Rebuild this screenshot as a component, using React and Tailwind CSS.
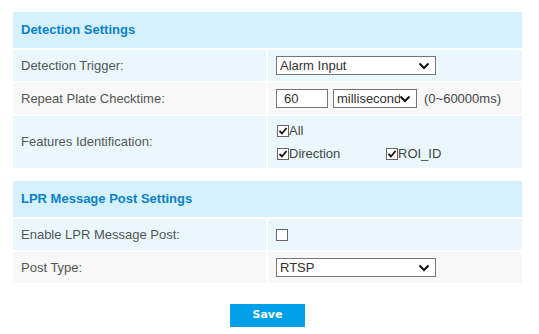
import React from 'react';

const Chevron = () => (
  <svg width="12" height="8" viewBox="0 0 12 8" className="absolute right-[5px] top-1/2 -translate-y-1/2 pointer-events-none">
    <path d="M1.5 1.5 L6 6 L10.5 1.5" fill="none" stroke="#111" strokeWidth="2" />
  </svg>
);

const Select = ({ value, width }) => (
  <div className={`relative h-[19px] border border-[#767676] bg-white ${width}`}>
    <div className="absolute inset-y-0 left-0 right-[16px] overflow-hidden whitespace-nowrap pl-[3px] text-[13px] leading-[17px] text-[#333]">
      {value}
    </div>
    <Chevron />
  </div>
);

const Check = ({ checked, label }) => (
  <span className="flex items-center text-[13px] leading-[16px] text-[#444]">
    <span className="flex h-[12px] w-[12px] items-center justify-center border border-[#666] bg-white">
      {checked && (
        <svg width="10" height="10" viewBox="0 0 10 10">
          <path d="M1.5 5 L4 7.5 L8.5 2" fill="none" stroke="#111" strokeWidth="1.8" />
        </svg>
      )}
    </span>
    {label && <span>{label}</span>}
  </span>
);

const Header = ({ title }) => (
  <div className="flex h-[36px] items-center bg-[#d5f1fd] px-[8px] text-[13px] font-bold text-[#0a82c9]">
    {title}
  </div>
);

const Row = ({ label, tone, height = 'h-[31px]', children }) => {
  const bg = tone === 'blue' ? 'bg-[#eaf8fe]' : 'bg-[#f8f8f8]';
  return (
    <div className={`flex gap-[2px] ${height}`}>
      <div className={`flex w-[253px] items-center px-[8px] text-[13px] text-[#555] ${bg}`}>{label}</div>
      <div className={`flex flex-1 items-center px-[8px] ${bg}`}>{children}</div>
    </div>
  );
};

export default function App() {
  return (
    <div className="h-[334px] w-[539px] bg-white pt-[12px] pl-[13px]" style={{ fontFamily: '"Liberation Sans", Arial, sans-serif' }}>
      <div className="flex w-[509px] flex-col gap-[2px]">
        <Header title="Detection Settings" />
        <Row label="Detection Trigger:" tone="blue">
          <Select value="Alarm Input" width="w-[160px]" />
        </Row>
        <Row label="Repeat Plate Checktime:" tone="gray">
          <div className="flex items-center gap-[5px]">
            <div className="h-[19px] w-[52px] border border-[#767676] bg-white pl-[7px] text-[13px] leading-[17px] text-[#333]">60</div>
            <Select value="millisecond" width="w-[84px]" />
            <span className="ml-[2px] text-[13px] text-[#444]">(0~60000ms)</span>
          </div>
        </Row>
        <Row label="Features Identification:" tone="blue" height="h-[52px]">
          <div className="flex flex-col gap-[7px] pl-[1px] leading-[16px]">
            <Check checked label="All" />
            <div className="flex">
              <div className="flex w-[109px]"><Check checked label="Direction" /></div>
              <Check checked label="ROI_ID" />
            </div>
          </div>
        </Row>
      </div>

      <div className="mt-[13px] flex w-[509px] flex-col gap-[2px]">
        <Header title="LPR Message Post Settings" />
        <Row label="Enable LPR Message Post:" tone="blue">
          <Check />
        </Row>
        <Row label="Post Type:" tone="gray">
          <Select value="RTSP" width="w-[160px]" />
        </Row>
      </div>

      <div className="mt-[21px] flex w-[509px] justify-center">
        <button className="h-[23px] w-[75px] bg-[#00a0e9] text-[11px] font-semibold text-white" style={{ fontFamily: '"DejaVu Sans", Verdana, sans-serif' }}>
          Save
        </button>
      </div>
    </div>
  );
}
